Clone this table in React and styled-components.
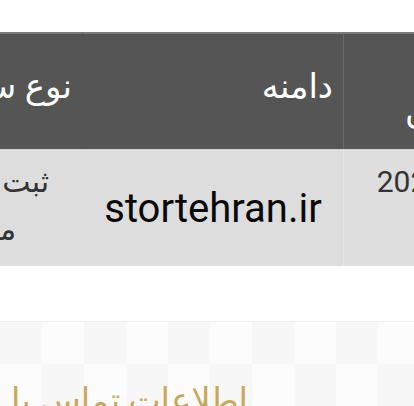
import React from 'react';
import styled, { createGlobalStyle } from 'styled-components';

const GlobalStyle = createGlobalStyle`
  html, body {
    margin: 0;
    padding: 0;
    background: #ffffff;
    overflow: hidden;
  }
  body {
    font-family: Roboto, "DejaVu Sans", sans-serif;
  }
`;

export default function App() {
    const columns = [
        { head: <>تاریخ<br />ثبت آنلاین</>, lines: ['2023/08/14', '10:25'], divider: true, pad: 28 },
        { head: 'دامنه', domain: 'stortehran.ir' },
        { head: 'نوع سفارش', lines: ['ثبت دامنه', 'ملی'] },
    ];

    return (
        <Page dir="rtl">
            <GlobalStyle />
            <TableWrap>
                <Table>
                    {columns.map((c, i) => (
                        <HeadCell key={'h' + i} $divider={c.divider} $pad={c.pad}>
                            <span>{c.head}</span>
                        </HeadCell>
                    ))}
                    {columns.map((c, i) => (
                        <DataCell key={'d' + i} $divider={c.divider}>
                            {c.domain ? (
                                <Domain dir="ltr">{c.domain}</Domain>
                            ) : (
                                <CellText>
                                    {c.lines.map((l, j) => (
                                        <div key={j}><bdi>{l}</bdi></div>
                                    ))}
                                </CellText>
                            )}
                        </DataCell>
                    ))}
                </Table>
            </TableWrap>
            <Contact>
                <ContactTitle>اطلاعات تماس با ما</ContactTitle>
            </Contact>
        </Page>
    );
}

const Page = styled.div`
  width: 414px;
  height: 406px;
  overflow: hidden;
  background: #ffffff;
`;

const TableWrap = styled.div`
  display: flex;
  overflow: hidden;
  padding-top: 32px;
  padding-bottom: 55px;
`;

const Table = styled.div`
  flex: none;
  display: grid;
  grid-template-columns: 226px 261px 184px;
  grid-template-rows: 117px 117px;
  width: 671px;
  margin-right: -155px;
`;

const HeadCell = styled.div`
  display: flex;
  align-items: center;
  box-sizing: border-box;
  padding: 0 ${p => p.$pad || 10}px 12px 10px;
  background: #555555;
  border-top: 2px solid #7a7a7a;
  border-left: 1px solid ${p => (p.$divider ? '#6a6a6a' : 'transparent')};
  color: #ffffff;
  font-size: 34px;
  line-height: 46px;
  text-align: right;
  white-space: nowrap;
`;

const DataCell = styled.div`
  display: flex;
  align-items: center;
  justify-content: center;
  box-sizing: border-box;
  background: #dddddd;
  border-top: 1px solid #d2d2d2;
  border-left: 1px solid ${p => (p.$divider ? '#e6e6e6' : 'transparent')};
  color: #333333;
  text-align: center;
`;

const CellText = styled.div`
  font-size: 30px;
  line-height: 48px;
  white-space: nowrap;
  padding-bottom: 4px;
`;

const Domain = styled.div`
  font-size: 40px;
  color: #0a0a0a;
`;

const Contact = styled.div`
  height: 90px;
  border-top: 1px solid #ededed;
  padding-top: 58px;
  padding-right: 166px;
  box-sizing: border-box;
  background-color: #f9f9f9;
  background-image: conic-gradient(#fcfcfc 25%, #f7f7f7 0 50%, #fcfcfc 0 75%, #f7f7f7 0);
  background-size: 84px 84px;
`;

const ContactTitle = styled.div`
  font-size: 34px;
  color: #c8a85e;
  white-space: nowrap;
`;
